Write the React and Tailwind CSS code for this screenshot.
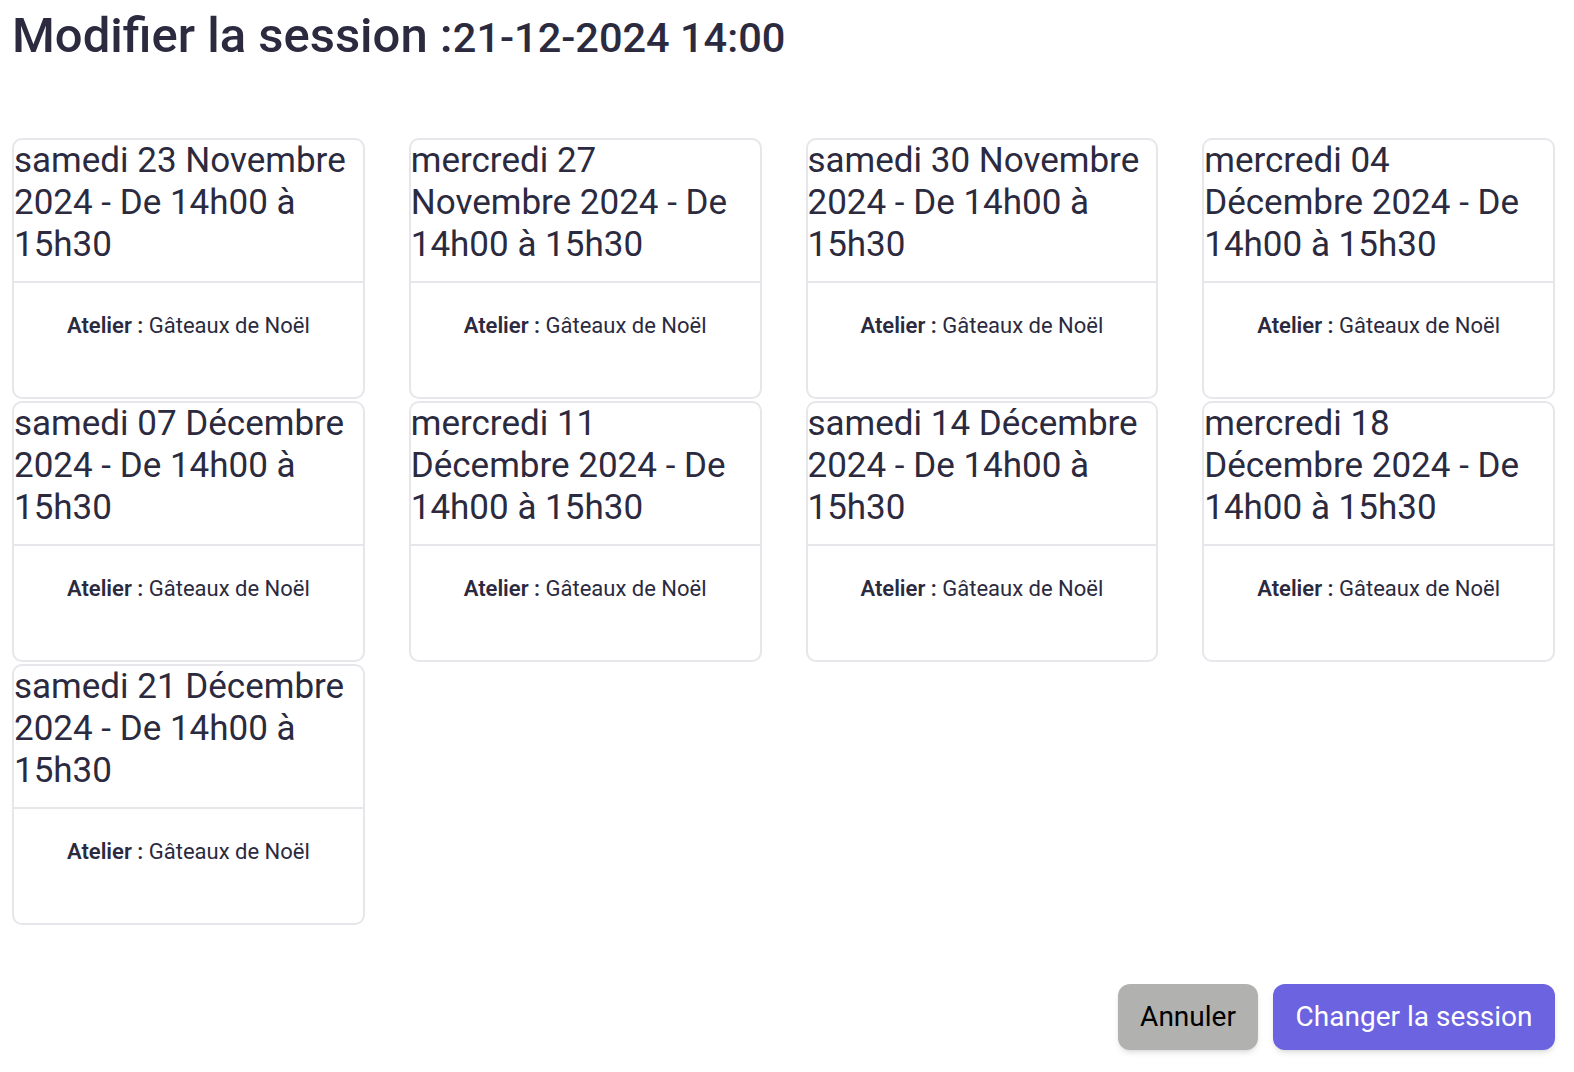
const sessions = [
  "samedi 23 Novembre 2024 - De 14h00 à 15h30",
  "mercredi 27 Novembre 2024 - De 14h00 à 15h30",
  "samedi 30 Novembre 2024 - De 14h00 à 15h30",
  "mercredi 04 Décembre 2024 - De 14h00 à 15h30",
  "samedi 07 Décembre 2024 - De 14h00 à 15h30",
  "mercredi 11 Décembre 2024 - De 14h00 à 15h30",
  "samedi 14 Décembre 2024 - De 14h00 à 15h30",
  "mercredi 18 Décembre 2024 - De 14h00 à 15h30",
  "samedi 21 Décembre 2024 - De 14h00 à 15h30",
];

function SessionCard({ label }) {
  return (
    <div className="flex flex-col rounded-[10px] border-2 border-[#e6e6eb] bg-white">
      <div className="border-b-2 border-[#e6e6eb] pb-[15px]">
        <h3 className="text-[35px] leading-[42px] font-normal">{label}</h3>
      </div>
      <div className="pt-[28px] pb-[56px] text-center text-[22px] leading-[30px]">
        <span className="font-semibold">Atelier :</span> Gâteaux de Noël
      </div>
    </div>
  );
}

export default function App() {
  return (
    <div className="min-h-screen bg-white pl-[12px] pr-[19px] font-['Roboto',sans-serif] text-[#2b2a3f]">
      <h1 className="h-[68px] pt-[4px] text-[49px] leading-[64px] font-medium">
        Modifier la session :<span className="text-[41.5px] leading-none">21-12-2024 14:00</span>
      </h1>
      <div className="mt-[70px] grid grid-cols-4 gap-x-[44px] gap-y-[2px]">
        {sessions.map((s) => (
          <SessionCard key={s} label={s} />
        ))}
      </div>
      <div className="mt-[59px] flex justify-end gap-[15px]">
        <button className="h-[66px] w-[140px] rounded-[12px] bg-[#b1b2af] text-[28px] text-black shadow-md">
          Annuler
        </button>
        <button className="h-[66px] w-[282px] rounded-[12px] bg-[#6b63e0] text-[28px] text-white shadow-md">
          Changer la session
        </button>
      </div>
    </div>
  );
}
